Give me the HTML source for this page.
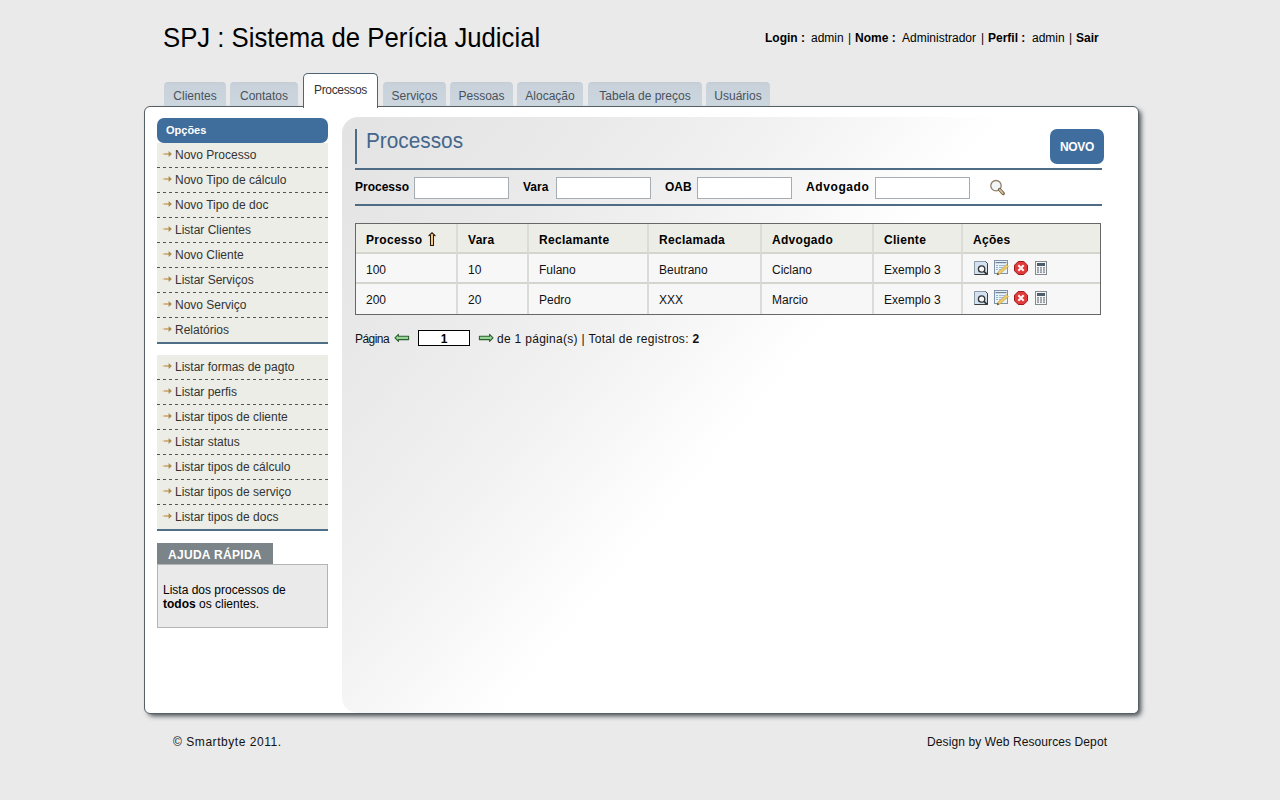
<!DOCTYPE html>
<html><head><meta charset="utf-8"><title>SPJ</title>
<style>
*{box-sizing:border-box}
html,body{margin:0;padding:0}
body{width:1280px;height:800px;overflow:hidden;position:relative;background:#EAEAEA;font-family:"Liberation Sans",sans-serif;color:#000;font-size:12px}
.a{position:absolute;white-space:nowrap}
#title{left:163px;top:20px;font-size:28px;line-height:36px;color:#000;transform:scaleX(0.918);transform-origin:0 0}
.u{position:absolute;top:31px;font-size:12px;line-height:14px;color:#000;white-space:nowrap}
.tab{position:absolute;top:82px;height:24px;background:linear-gradient(#C4CCD4 0,#C9D2DA 3px,#CCD6DF 100%);border-radius:4px 4px 0 0;color:#48525C;font-size:12px;line-height:14px;text-align:center;padding-top:7px;z-index:3}
.tab.on{top:73px;height:35px;background:#fff;border:1px solid #4E6577;border-bottom:none;color:#333;padding-top:9px;z-index:3;border-radius:5px 5px 0 0;letter-spacing:-0.35px}
#panel{position:absolute;left:144px;top:106px;width:995px;height:608px;background:#fff;border:1px solid #545F66;border-radius:6px;box-shadow:3px 3px 5px -1px rgba(20,30,35,0.78);z-index:2}
#side{position:absolute;left:157px;top:118px;width:171px;z-index:4}
.hdr{height:25px;background:#3F6D9C;border-radius:7px;color:#fff;font-weight:bold;font-size:11px;line-height:14px;padding:5px 0 0 9px}
.grp{background:#ECEDE7}
.it{height:25px;position:relative;color:#333;font-size:12px;line-height:14px;padding:5px 0 0 18px}
.it:before{content:"";position:absolute;left:0;right:0;bottom:0;height:1px;background:repeating-linear-gradient(90deg,#555 0 3px,transparent 3px 6px)}
.it.last{height:26px}
.it.last:before{height:2px;background:#4F6E88}
.arr{position:absolute;left:3px;top:7px}
#help-t{position:absolute;left:157px;top:543px;width:116px;height:21px;background:#7B8488;color:#fff;font-weight:bold;font-size:12px;line-height:14px;padding:5px 0 0 11px;z-index:4;letter-spacing:0.3px}
#help-b{position:absolute;left:157px;top:564px;width:171px;height:64px;background:#EAEAEA;border:1px solid #B4B4B4;font-size:12px;line-height:14px;padding:18px 0 0 5px;z-index:4;color:#000}
#content{position:absolute;left:342px;top:117px;width:796px;height:596px;border-radius:16px 0 5px 16px;background:linear-gradient(130deg,#E3E3E3 0%,#EAEAEA 20%,#F1F1F1 33%,#F7F7F7 41%,#FCFCFC 47%,#FFFFFF 51%);z-index:3}

#ptitle{left:355px;top:129px;width:2px;height:35px;background:#4E6C86;z-index:5}
#ptitle-t{left:366px;top:129px;font-size:22px;line-height:24px;color:#44668C;z-index:5;transform:scaleX(0.945);transform-origin:0 0}
.hl{position:absolute;left:355px;width:747px;height:2px;background:#4E6C86;z-index:5}
#novo{left:1050px;top:129px;width:54px;height:35px;background:#3F6E9E;border-radius:7px;color:#fff;font-size:12px;font-weight:bold;line-height:14px;text-align:center;padding-top:11px;z-index:5;letter-spacing:-0.3px}
.lbl{position:absolute;top:180px;font-weight:bold;font-size:12px;line-height:14px;z-index:5}
.inp{position:absolute;top:177px;width:95px;height:22px;background:#fff;border:1px solid #A5ACB2;z-index:5}
#tbl{position:absolute;left:355px;top:223px;border-collapse:separate;border-spacing:0;border:1px solid #676767;z-index:5;font-size:12px;table-layout:fixed;width:746px}
#tbl td,#tbl th{height:30px;border-right:2px solid #DBDBD7;border-bottom:2px solid #D5D5D0;padding:9px 0 0 10px;text-align:left;line-height:14px;white-space:nowrap;vertical-align:top}
#tbl tr:last-child td{border-bottom:none}
#tbl th:last-child,#tbl td:last-child{border-right:none}
#tbl th{background:#EDEDE7;font-weight:bold;color:#000;position:relative;letter-spacing:0.3px}
#tbl td{background:#F7F7F7;color:#111}
#pag{left:355px;top:332px;font-size:12px;line-height:14px;z-index:5;color:#111}
#pgbox{position:absolute;left:418px;top:330px;width:52px;height:16px;border:1px solid #000;background:#fff;font-weight:bold;text-align:center;font-size:12px;line-height:14px;z-index:5;padding-top:1px}
#foot1{left:173px;top:735px;font-size:12px;line-height:14px;color:#111;letter-spacing:0.55px}
#foot2{left:927px;top:735px;font-size:12px;line-height:14px;color:#111;letter-spacing:0.1px}
.icos{position:absolute;left:0;top:7px;width:90px;height:15px}
.icos svg{position:absolute;top:0}
#tbl td{position:relative}
</style></head>
<body>
<div id="title" class="a">SPJ : Sistema de Perícia Judicial</div>
<span class="u" style="left:765px;font-weight:bold">Login :</span><span class="u" style="left:811px">admin</span><span class="u" style="left:848px">|</span><span class="u" style="left:855px;font-weight:bold">Nome :</span><span class="u" style="left:902px">Administrador</span><span class="u" style="left:981px">|</span><span class="u" style="left:988px;font-weight:bold">Perfil :</span><span class="u" style="left:1032px">admin</span><span class="u" style="left:1069px">|</span><span class="u" style="left:1076px;font-weight:bold">Sair</span>

<div class="tab" style="left:164px;width:62px">Clientes</div>
<div class="tab" style="left:230px;width:68px">Contatos</div>
<div class="tab on" style="left:303px;width:75px">Processos</div>
<div class="tab" style="left:383px;width:63px">Serviços</div>
<div class="tab" style="left:450px;width:63px">Pessoas</div>
<div class="tab" style="left:517px;width:66px">Alocação</div>
<div class="tab" style="left:588px;width:114px">Tabela de preços</div>
<div class="tab" style="left:706px;width:64px">Usuários</div>

<div id="panel"></div>
<div id="content"></div>

<div id="side">
 <div class="hdr">Opções</div>
 <div class="grp">
  <div class="it"><svg class="arr" width="13" height="8" viewBox="0 0 13 8"><rect x="2" y="3.4" width="2" height="1.2" fill="#F0CF98"/><rect x="4" y="3.5" width="5" height="1" fill="#A8823C"/><path d="M8.6 1 L11.8 4 L8.6 7 Z" fill="#B08840"/></svg>Novo Processo</div>
  <div class="it"><svg class="arr" width="13" height="8" viewBox="0 0 13 8"><rect x="2" y="3.4" width="2" height="1.2" fill="#F0CF98"/><rect x="4" y="3.5" width="5" height="1" fill="#A8823C"/><path d="M8.6 1 L11.8 4 L8.6 7 Z" fill="#B08840"/></svg>Novo Tipo de cálculo</div>
  <div class="it"><svg class="arr" width="13" height="8" viewBox="0 0 13 8"><rect x="2" y="3.4" width="2" height="1.2" fill="#F0CF98"/><rect x="4" y="3.5" width="5" height="1" fill="#A8823C"/><path d="M8.6 1 L11.8 4 L8.6 7 Z" fill="#B08840"/></svg>Novo Tipo de doc</div>
  <div class="it"><svg class="arr" width="13" height="8" viewBox="0 0 13 8"><rect x="2" y="3.4" width="2" height="1.2" fill="#F0CF98"/><rect x="4" y="3.5" width="5" height="1" fill="#A8823C"/><path d="M8.6 1 L11.8 4 L8.6 7 Z" fill="#B08840"/></svg>Listar Clientes</div>
  <div class="it"><svg class="arr" width="13" height="8" viewBox="0 0 13 8"><rect x="2" y="3.4" width="2" height="1.2" fill="#F0CF98"/><rect x="4" y="3.5" width="5" height="1" fill="#A8823C"/><path d="M8.6 1 L11.8 4 L8.6 7 Z" fill="#B08840"/></svg>Novo Cliente</div>
  <div class="it"><svg class="arr" width="13" height="8" viewBox="0 0 13 8"><rect x="2" y="3.4" width="2" height="1.2" fill="#F0CF98"/><rect x="4" y="3.5" width="5" height="1" fill="#A8823C"/><path d="M8.6 1 L11.8 4 L8.6 7 Z" fill="#B08840"/></svg>Listar Serviços</div>
  <div class="it"><svg class="arr" width="13" height="8" viewBox="0 0 13 8"><rect x="2" y="3.4" width="2" height="1.2" fill="#F0CF98"/><rect x="4" y="3.5" width="5" height="1" fill="#A8823C"/><path d="M8.6 1 L11.8 4 L8.6 7 Z" fill="#B08840"/></svg>Novo Serviço</div>
  <div class="it last"><svg class="arr" width="13" height="8" viewBox="0 0 13 8"><rect x="2" y="3.4" width="2" height="1.2" fill="#F0CF98"/><rect x="4" y="3.5" width="5" height="1" fill="#A8823C"/><path d="M8.6 1 L11.8 4 L8.6 7 Z" fill="#B08840"/></svg>Relatórios</div>
 </div>
 <div class="grp" style="margin-top:11px">
  <div class="it"><svg class="arr" width="13" height="8" viewBox="0 0 13 8"><rect x="2" y="3.4" width="2" height="1.2" fill="#F0CF98"/><rect x="4" y="3.5" width="5" height="1" fill="#A8823C"/><path d="M8.6 1 L11.8 4 L8.6 7 Z" fill="#B08840"/></svg>Listar formas de pagto</div>
  <div class="it"><svg class="arr" width="13" height="8" viewBox="0 0 13 8"><rect x="2" y="3.4" width="2" height="1.2" fill="#F0CF98"/><rect x="4" y="3.5" width="5" height="1" fill="#A8823C"/><path d="M8.6 1 L11.8 4 L8.6 7 Z" fill="#B08840"/></svg>Listar perfis</div>
  <div class="it"><svg class="arr" width="13" height="8" viewBox="0 0 13 8"><rect x="2" y="3.4" width="2" height="1.2" fill="#F0CF98"/><rect x="4" y="3.5" width="5" height="1" fill="#A8823C"/><path d="M8.6 1 L11.8 4 L8.6 7 Z" fill="#B08840"/></svg>Listar tipos de cliente</div>
  <div class="it"><svg class="arr" width="13" height="8" viewBox="0 0 13 8"><rect x="2" y="3.4" width="2" height="1.2" fill="#F0CF98"/><rect x="4" y="3.5" width="5" height="1" fill="#A8823C"/><path d="M8.6 1 L11.8 4 L8.6 7 Z" fill="#B08840"/></svg>Listar status</div>
  <div class="it"><svg class="arr" width="13" height="8" viewBox="0 0 13 8"><rect x="2" y="3.4" width="2" height="1.2" fill="#F0CF98"/><rect x="4" y="3.5" width="5" height="1" fill="#A8823C"/><path d="M8.6 1 L11.8 4 L8.6 7 Z" fill="#B08840"/></svg>Listar tipos de cálculo</div>
  <div class="it"><svg class="arr" width="13" height="8" viewBox="0 0 13 8"><rect x="2" y="3.4" width="2" height="1.2" fill="#F0CF98"/><rect x="4" y="3.5" width="5" height="1" fill="#A8823C"/><path d="M8.6 1 L11.8 4 L8.6 7 Z" fill="#B08840"/></svg>Listar tipos de serviço</div>
  <div class="it last"><svg class="arr" width="13" height="8" viewBox="0 0 13 8"><rect x="2" y="3.4" width="2" height="1.2" fill="#F0CF98"/><rect x="4" y="3.5" width="5" height="1" fill="#A8823C"/><path d="M8.6 1 L11.8 4 L8.6 7 Z" fill="#B08840"/></svg>Listar tipos de docs</div>
 </div>
</div>

<div id="ptitle" class="a"></div>
<div id="ptitle-t" class="a">Processos</div>
<div id="novo" class="a">NOVO</div>
<div class="hl" style="top:168px"></div>
<div class="lbl" style="left:355px">Processo</div><div class="inp" style="left:414px"></div>
<div class="lbl" style="left:523px">Vara</div><div class="inp" style="left:556px"></div>
<div class="lbl" style="left:665px">OAB</div><div class="inp" style="left:697px"></div>
<div class="lbl" style="left:806px;letter-spacing:0.6px">Advogado</div><div class="inp" style="left:875px"></div>
<svg class="a" id="lupa" style="left:988px;top:178px;z-index:5" width="20" height="20" viewBox="0 0 20 20"><circle cx="8" cy="7.7" r="5.2" fill="#F2F6F8" stroke="#8E7F66" stroke-width="1.3"/><path d="M11.6 11.6 L15.2 15.4" stroke="#6E5E48" stroke-width="3.4" stroke-linecap="round"/><path d="M11.8 11.8 L14.8 15" stroke="#D9C294" stroke-width="1.8" stroke-linecap="round"/></svg>
<div class="hl" style="top:204px"></div>
<table id="tbl">
<tr><th style="width:102px">Processo<svg style="position:absolute;left:72px;top:8px" width="9" height="15" viewBox="0 0 9 15"><path d="M2.5 13.5 V3.2 L4 1.8 L5.5 3.2 V13.5 Z" fill="#FAD08A"/><path d="M0.6 4 L4 0.8 L7.4 4 M2.5 3 V13.5 H5.5 V3" fill="none" stroke="#2B1A08" stroke-width="1.05"/></svg></th><th style="width:71px">Vara</th><th style="width:120px">Reclamante</th><th style="width:113px">Reclamada</th><th style="width:112px">Advogado</th><th style="width:89px">Cliente</th><th style="width:137px">Ações</th></tr>
<tr><td>100</td><td>10</td><td>Fulano</td><td>Beutrano</td><td>Ciclano</td><td>Exemplo 3</td><td><span class="icos"><svg style="left:11px" width="14" height="14" viewBox="0 0 14 14"><path d="M0.5 0.5 H11.5 L13.5 2.5 V13.5 H0.5 Z" fill="#D3E1F0" stroke="#8D9BA8" stroke-width="1"/><path d="M11.5 0.5 L13.5 2.5 V13.5 H0.5" fill="none" stroke="#3C3C3C" stroke-width="1"/><circle cx="7.6" cy="8" r="3.2" fill="#F4F6F8" stroke="#333" stroke-width="1.3"/><path d="M10 10.4 L13 13.4" stroke="#333" stroke-width="1.8"/></svg><svg style="left:31px;top:-1px" width="16" height="16" viewBox="0 0 16 16"><rect x="0.5" y="0.5" width="13" height="13" fill="#EAF2FA" stroke="#7E91A6" stroke-width="1"/><rect x="1.5" y="2" width="11" height="1.2" fill="#6F8296"/><rect x="2" y="5" width="2" height="1" fill="#8FB0D0"/><rect x="5" y="5" width="6" height="1" fill="#9DBAD6"/><rect x="2" y="7" width="2" height="1" fill="#8FB0D0"/><rect x="5" y="7" width="5" height="1" fill="#9DBAD6"/><rect x="2" y="9" width="2" height="1" fill="#8FB0D0"/><rect x="5" y="9" width="4" height="1" fill="#9DBAD6"/><path d="M3 15 L4 12 L12.5 4.5 L14.5 6.5 L6 14 Z" fill="#EBCB6A" stroke="#C09A40" stroke-width="0.6"/><path d="M3 15 L3.7 12.8 L5.2 14.3 Z" fill="#3A3020"/></svg><svg style="left:51px" width="14" height="14" viewBox="0 0 14 14"><path d="M4.2 0.5 H9.8 L13.5 4.2 V9.8 L9.8 13.5 H4.2 L0.5 9.8 V4.2 Z" fill="#E03A3A" stroke="#9E1A1A" stroke-width="1"/><path d="M4.3 4.3 L9.7 9.7 M9.7 4.3 L4.3 9.7" stroke="#FFF2F2" stroke-width="2.1"/></svg><svg style="left:72px" width="12" height="14" viewBox="0 0 12 14"><rect x="0.5" y="0.5" width="11" height="13" fill="#F4F5F7" stroke="#85898C" stroke-width="1"/><rect x="2" y="2" width="8" height="3" fill="#4D5D6B"/><g fill="#6E777F"><rect x="2" y="6.3" width="2" height="1.2"/><rect x="5" y="6.3" width="2" height="1.2"/><rect x="8" y="6.3" width="2" height="1.2"/><rect x="2" y="8.4" width="2" height="1.2"/><rect x="5" y="8.4" width="2" height="1.2"/><rect x="8" y="8.4" width="2" height="1.2"/><rect x="2" y="10.5" width="2" height="1.2"/><rect x="5" y="10.5" width="2" height="1.2"/><rect x="8" y="10.5" width="2" height="1.2"/></g></svg></span></td></tr>
<tr><td>200</td><td>20</td><td>Pedro</td><td>XXX</td><td>Marcio</td><td>Exemplo 3</td><td><span class="icos"><svg style="left:11px" width="14" height="14" viewBox="0 0 14 14"><path d="M0.5 0.5 H11.5 L13.5 2.5 V13.5 H0.5 Z" fill="#D3E1F0" stroke="#8D9BA8" stroke-width="1"/><path d="M11.5 0.5 L13.5 2.5 V13.5 H0.5" fill="none" stroke="#3C3C3C" stroke-width="1"/><circle cx="7.6" cy="8" r="3.2" fill="#F4F6F8" stroke="#333" stroke-width="1.3"/><path d="M10 10.4 L13 13.4" stroke="#333" stroke-width="1.8"/></svg><svg style="left:31px;top:-1px" width="16" height="16" viewBox="0 0 16 16"><rect x="0.5" y="0.5" width="13" height="13" fill="#EAF2FA" stroke="#7E91A6" stroke-width="1"/><rect x="1.5" y="2" width="11" height="1.2" fill="#6F8296"/><rect x="2" y="5" width="2" height="1" fill="#8FB0D0"/><rect x="5" y="5" width="6" height="1" fill="#9DBAD6"/><rect x="2" y="7" width="2" height="1" fill="#8FB0D0"/><rect x="5" y="7" width="5" height="1" fill="#9DBAD6"/><rect x="2" y="9" width="2" height="1" fill="#8FB0D0"/><rect x="5" y="9" width="4" height="1" fill="#9DBAD6"/><path d="M3 15 L4 12 L12.5 4.5 L14.5 6.5 L6 14 Z" fill="#EBCB6A" stroke="#C09A40" stroke-width="0.6"/><path d="M3 15 L3.7 12.8 L5.2 14.3 Z" fill="#3A3020"/></svg><svg style="left:51px" width="14" height="14" viewBox="0 0 14 14"><path d="M4.2 0.5 H9.8 L13.5 4.2 V9.8 L9.8 13.5 H4.2 L0.5 9.8 V4.2 Z" fill="#E03A3A" stroke="#9E1A1A" stroke-width="1"/><path d="M4.3 4.3 L9.7 9.7 M9.7 4.3 L4.3 9.7" stroke="#FFF2F2" stroke-width="2.1"/></svg><svg style="left:72px" width="12" height="14" viewBox="0 0 12 14"><rect x="0.5" y="0.5" width="11" height="13" fill="#F4F5F7" stroke="#85898C" stroke-width="1"/><rect x="2" y="2" width="8" height="3" fill="#4D5D6B"/><g fill="#6E777F"><rect x="2" y="6.3" width="2" height="1.2"/><rect x="5" y="6.3" width="2" height="1.2"/><rect x="8" y="6.3" width="2" height="1.2"/><rect x="2" y="8.4" width="2" height="1.2"/><rect x="5" y="8.4" width="2" height="1.2"/><rect x="8" y="8.4" width="2" height="1.2"/><rect x="2" y="10.5" width="2" height="1.2"/><rect x="5" y="10.5" width="2" height="1.2"/><rect x="8" y="10.5" width="2" height="1.2"/></g></svg></span></td></tr>
</table>
<div id="pag" class="a" style="letter-spacing:-0.55px">Página</div>
<div id="pgbox">1</div>
<svg class="a" style="left:394px;top:333px;z-index:5" width="16" height="10" viewBox="0 0 16 10"><path d="M1 4.8 L4.4 1.4 V3.2 H14.6 V6.6 H4.4 V8.4 Z" fill="#94D494" stroke="#2F5F30" stroke-width="1.1" stroke-linejoin="round"/></svg>
<svg class="a" style="left:478px;top:333px;z-index:5" width="16" height="10" viewBox="0 0 16 10"><path d="M15 4.8 L11.6 1.4 V3.2 H1.4 V6.6 H11.6 V8.4 Z" fill="#94D494" stroke="#2F5F30" stroke-width="1.1" stroke-linejoin="round"/></svg>

<div class="a" style="left:497px;top:332px;font-size:12px;line-height:14px;z-index:5;color:#111;letter-spacing:0.3px">de 1 página(s) | Total de registros: <b>2</b></div>

<div id="help-t">AJUDA RÁPIDA</div>
<div id="help-b">Lista dos processos de<br><b>todos</b> os clientes.</div>


<div id="foot1" class="a">© Smartbyte 2011.</div>
<div id="foot2" class="a">Design by Web Resources Depot</div>
</body></html>
